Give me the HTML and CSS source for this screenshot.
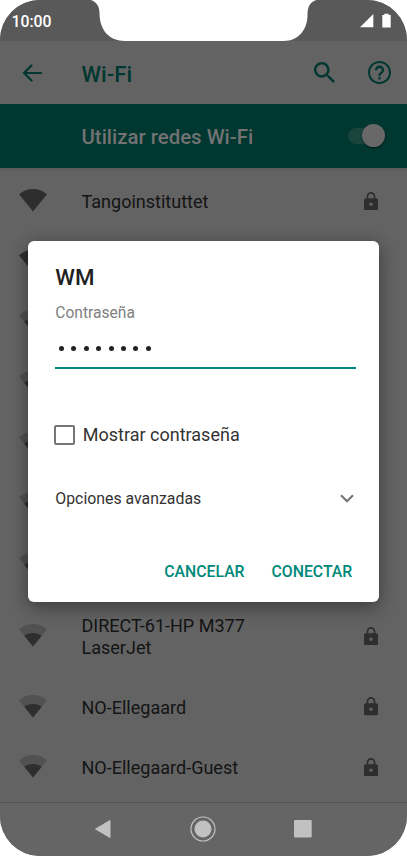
FILE: index.html
```html
<!DOCTYPE html>
<html lang="es">
<head>
<meta charset="utf-8">
<title>Wi-Fi</title>
<link rel="stylesheet" href="styles.css">
</head>
<body>
<svg class="defs" width="0" height="0">
  <symbol id="wifi-full" viewBox="0 0 28 23"><path d="M14 22.5 0 5.3C8-1.7 20-1.7 28 5.3Z" fill="#2e2e2e"/></symbol>
  <symbol id="wifi-weak" viewBox="0 0 28 23"><path d="M14 22.5 0 5.3C8-1.7 20-1.7 28 5.3Z" fill="#515151"/><path d="M14 22.5 5.3 11.8C10.5 8.2 17.500 8.2 22.700 11.800Z" fill="#2e2e2e"/></symbol>
  <symbol id="lock" viewBox="4 1 16 21"><path d="M18 8h-1V6c0-2.760-2.240-5-5-5S7 3.240 7 6v2H6c-1.100 0-2 .9-2 2v10c0 1.100.9 2 2 2h12c1.100 0 2-.9 2-2V10c0-1.100-.9-2-2-2zm-6 9c-1.100 0-2-.9-2-2s.9-2 2-2 2 .9 2 2-.9 2-2 2zm3.100-9H8.900V6c0-1.710 1.390-3.100 3.100-3.100s3.100 1.390 3.100 3.100v2z" fill="#2e2e2e"/></symbol>
</svg>
<main class="phone">
  <div class="status">
    <span class="clock">10:00</span>
    <svg class="signals" width="32" height="16" viewBox="0 0 32 16"><path d="M0 14.300 13.300 1v13.300Z" fill="#fff"/><path d="M22.300 2h2V.7h4.400V2h2v12.600h-8.400Z" fill="#fff"/></svg>
  </div>
  <svg class="notch" width="240" height="42" viewBox="0 0 240 42"><path d="M0-1C10-1 15.500 4 15.500 13C15.500 30 25 41 41 41H200C214 41 223.500 30 223.500 15C223.500 5 227-1 240-1Z" fill="#fff"/></svg>
  <header class="appbar">
    <svg class="back" width="20" height="18" viewBox="0 0 20 18"><path d="M19 9H2M9.500 1.500 2 9l7.500 7.500" fill="none" stroke="#003730" stroke-width="2.200" stroke-linecap="round"/></svg>
    <h1>Wi-Fi</h1>
    <svg class="search" width="21" height="21" viewBox="3 3 17.500 17.500"><path d="M15.500 14h-.790l-.280-.270C15.410 12.590 16 11.110 16 9.500 16 5.910 13.090 3 9.500 3S3 5.910 3 9.500 5.910 16 9.500 16c1.610 0 3.090-.590 4.230-1.570l.270.280v.790l5 4.990L20.490 19l-4.990-5zm-6 0C7.010 14 5 11.990 5 9.500S7.010 5 9.500 5 14 7.010 14 9.500 11.990 14 9.500 14z" fill="#003730"/></svg>
    <svg class="help" width="23" height="23" viewBox="2 2 20 20"><path d="M11 18h2v-2h-2v2zm1-16C6.480 2 2 6.480 2 12s4.480 10 10 10 10-4.480 10-10S17.520 2 12 2zm0 18.200c-4.500 0-8.200-3.700-8.200-8.200S7.500 3.800 12 3.800s8.200 3.700 8.200 8.200-3.700 8.200-8.200 8.200zM12 6c-2.210 0-4 1.790-4 4h2c0-1.100.9-2 2-2s2 .9 2 2c0 2-3 1.750-3 5h2c0-2.250 3-2.500 3-5 0-2.210-1.790-4-4-4z" fill="#003730"/></svg>
  </header>
  <section class="toggle">
    <span class="toggle-text">Utilizar redes Wi-Fi</span>
    <span class="switch"><span class="knob"></span></span>
  </section>
  <ul class="networks">
    <li><svg class="wifi"><use href="#wifi-full"/></svg><span>Tangoinstituttet</span><svg class="lock"><use href="#lock"/></svg></li>
    <li><svg class="wifi"><use href="#wifi-full"/></svg></li>
    <li><svg class="wifi"><use href="#wifi-weak"/></svg></li>
    <li><svg class="wifi"><use href="#wifi-weak"/></svg></li>
    <li><svg class="wifi"><use href="#wifi-weak"/></svg></li>
    <li><svg class="wifi"><use href="#wifi-weak"/></svg></li>
    <li><svg class="wifi"><use href="#wifi-weak"/></svg></li>
    <li class="tall"><svg class="wifi"><use href="#wifi-weak"/></svg><span>DIRECT-61-HP M377<br>LaserJet</span><svg class="lock"><use href="#lock"/></svg></li>
    <li><svg class="wifi"><use href="#wifi-weak"/></svg><span>NO-Ellegaard</span><svg class="lock"><use href="#lock"/></svg></li>
    <li><svg class="wifi"><use href="#wifi-weak"/></svg><span>NO-Ellegaard-Guest</span><svg class="lock"><use href="#lock"/></svg></li>
  </ul>
  <nav class="nav">
    <svg width="18" height="20" viewBox="0 0 18 20"><path d="M1.500 10 16 1.500v17Z" fill="#c1c1c1" stroke="#c1c1c1" stroke-linejoin="round"/></svg>
    <svg width="26" height="26" viewBox="0 0 26 26"><circle cx="13" cy="13" r="12" fill="none" stroke="#c1c1c1" stroke-width="1.200"/><circle cx="13" cy="13" r="8.500" fill="#c1c1c1"/></svg>
    <svg width="18" height="18" viewBox="0 0 18 18"><rect width="17.700" height="17.500" rx="1.300" fill="#c1c1c1"/></svg>
  </nav>
  <section class="dialog" role="dialog">
    <h2>WM</h2>
    <label class="label">Contraseña</label>
    <div class="field"><i></i><i></i><i></i><i></i><i></i><i></i><i></i><i></i></div>
    <div class="check"><span class="box"></span><span>Mostrar contraseña</span></div>
    <div class="advanced"><span>Opciones avanzadas</span><svg width="14" height="9" viewBox="0 0 14 9"><path d="M1 1.300 7 7.200 13 1.300" fill="none" stroke="#757575" stroke-width="2.200"/></svg></div>
    <div class="actions"><span>CANCELAR</span><span>CONECTAR</span></div>
  </section>
</main>
</body>
</html>
```
FILE: styles.css
```css
* { box-sizing: border-box; }
body { margin: 0; background: #fff; font-family: Roboto, sans-serif; }
.defs { position: absolute; }
.phone {
  position: relative;
  display: flex;
  flex-direction: column;
  width: 407px;
  height: 856px;
  overflow: hidden;
  border-radius: 40px;
  background: #636363;
}
.status {
  display: flex;
  justify-content: space-between;
  height: 41px;
  padding: 12.500px 14px 0 11.500px;
  background: #595959;
}
.clock { color: #fff; font-size: 15.800px; line-height: 17px; font-weight: 500; }
.signals { margin-right: 1px; }
.notch { position: absolute; top: 0; left: 84px; }
.appbar { display: flex; align-items: center; height: 63px; padding: 0 16.200px 0 22px; }
.back { margin-right: 39.500px; }
h1 { flex: 1; margin: 2px 0 0; color: #003730; font-size: 22.200px; line-height: 26px; font-weight: 500; }
.search { margin-right: 32.500px; }
.toggle {
  display: flex;
  align-items: center;
  justify-content: space-between;
  height: 63.500px;
  padding: 0 22px 0 81.500px;
  background: #003730;
  color: #737373;
  font-size: 20.400px;
  font-weight: 500;
}
.toggle-text { margin-top: 2px; }
.switch { display: flex; justify-content: flex-end; align-items: center; width: 37px; height: 16px; border-radius: 8px; background: #1a453f; }
.knob { width: 23px; height: 23px; border-radius: 50%; background: #686868; box-shadow: 0 1px 2px rgba(0, 0, 0, .5); }
.networks {
  flex: 1;
  margin: 0;
  padding: .9px 0 0;
  list-style: none;
  border-top: 3px solid #5e5e5e;
  color: #141414;
  font-size: 18.050px;
  line-height: 21.500px;
}
.networks li { display: flex; align-items: center; height: 60.700px; padding: 0 28px 0 18.700px; }
.networks li.tall { height: 81px; }
.wifi { width: 28px; height: 23px; margin: -2.500px 34.800px 0 0; flex: none; }
.lock { width: 14px; height: 18.400px; margin: -2px 1px 0 auto; flex: none; }
.nav {
  display: flex;
  align-items: center;
  justify-content: space-between;
  height: 54px;
  padding: 0 95px 2px 94px;
  border-top: 1px solid #555;
  background: #656565;
}
.dialog {
  position: absolute;
  top: 240.500px;
  left: 28.300px;
  width: 350.500px;
  height: 361.200px;
  padding: 23.300px 22.500px 0 27px;
  border-radius: 6px;
  background: #fff;
  box-shadow: 0 8px 18px rgba(0, 0, 0, .25), 0 0 16px rgba(0, 0, 0, .18);
}
h2 { margin: 0; color: #212121; font-size: 22.300px; line-height: 27px; font-weight: 500; }
.label { display: block; margin-top: 12.200px; color: #808080; font-size: 15.600px; line-height: 20px; }
.field {
  display: flex;
  align-items: center;
  gap: 7.450px;
  height: 46px;
  padding: 7.500px 0 0 3.500px;
  border-bottom: 2.500px solid #00897b;
}
.field i { width: 5px; height: 5px; border-radius: 50%; background: #212121; }
.check { display: flex; align-items: center; height: 24px; margin-top: 53.700px; color: #333; font-size: 18px; }
.box { width: 20.500px; height: 20px; margin: 0 8px 0 -1px; border: 2px solid #757575; border-radius: 2px; }
.advanced { display: flex; align-items: center; justify-content: space-between; height: 20px; margin-top: 42px; padding-right: 2px; color: #333; font-size: 15.850px; }
.actions { display: flex; justify-content: flex-end; gap: 27px; margin-top: 53px; padding-right: 4px; color: #00897b; font-size: 15.800px; line-height: 20px; font-weight: 500; }
```
